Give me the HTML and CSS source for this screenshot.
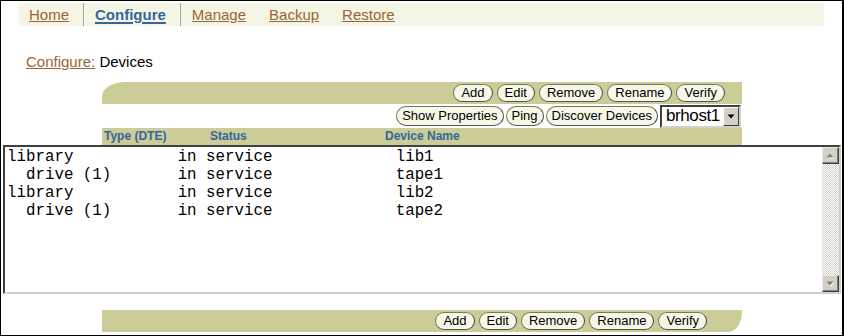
FILE: index.html
```html
<!DOCTYPE html>
<html>
<head>
<meta charset="utf-8">
<title>Configure: Devices</title>
<link rel="stylesheet" href="styles.css">
</head>
<body>
<div class="frame">
  <nav class="tabs">
    <a class="tab first" href="#">Home</a>
    <span class="sep"></span>
    <a class="tab active" href="#">Configure</a>
    <span class="sep"></span>
    <a class="tab" href="#">Manage</a>
    <a class="tab" href="#">Backup</a>
    <a class="tab" href="#">Restore</a>
  </nav>

  <div class="crumb"><a href="#">Configure:</a> Devices</div>

  <div class="panel">
    <div class="bar bar-top">
      <button class="pill">Add</button>
      <button class="pill">Edit</button>
      <button class="pill">Remove</button>
      <button class="pill">Rename</button>
      <button class="pill">Verify</button>
    </div>
    <div class="row2">
      <button class="pill sm">Show Properties</button>
      <button class="pill sm">Ping</button>
      <button class="pill sm">Discover Devices</button>
      <div class="select">
        <span class="sel-text">brhost1</span>
        <span class="sel-btn"><svg width="8" height="5" viewBox="0 0 8 5"><path d="M0.5 0.5h7L4 4.5z" fill="#000"/></svg></span>
      </div>
    </div>
    <div class="cols">
      <span class="c1">Type (DTE)</span>
      <span class="c2">Status</span>
      <span class="c3">Device Name</span>
    </div>
  </div>

  <div class="listbox">
    <pre class="list">library           in service             lib1
  drive (1)       in service             tape1
library           in service             lib2
  drive (1)       in service             tape2</pre>
    <div class="vscroll">
      <div class="sb-btn"><svg width="9" height="6" viewBox="0 0 9 6"><path d="M1.5 5.5h7L5 1.5z" fill="#fff"/><path d="M0.5 4.5h7L4 0.5z" fill="#808080"/></svg></div>
      <div class="sb-track"></div>
      <div class="sb-btn"><svg width="9" height="6" viewBox="0 0 9 6"><path d="M1.5 1.5h7L5 5.5z" fill="#fff"/><path d="M0.5 0.5h7L4 4.5z" fill="#808080"/></svg></div>
    </div>
  </div>

  <div class="panel bottom-panel">
    <div class="bar bar-bottom">
      <button class="pill">Add</button>
      <button class="pill">Edit</button>
      <button class="pill">Remove</button>
      <button class="pill">Rename</button>
      <button class="pill">Verify</button>
    </div>
  </div>
</div>
</body>
</html>
```

FILE: styles.css
```css
html, body {
  margin: 0;
  padding: 0;
  background: #fff;
}

.frame {
  width: 844px;
  height: 336px;
  box-sizing: border-box;
  border: 1px solid #000;
  border-right-width: 2px;
  font-family: "Liberation Sans", Arial, sans-serif;
  overflow: hidden;
}

/* Tabs */
.tabs {
  display: flex;
  height: 23px;
  margin: 2px 18px 0 18px;
  background: #f5f5e6;
}
.tab {
  font-size: 15px;
  line-height: 23px;
  color: #996633;
  text-decoration: underline;
  padding: 0 12px 0 11px;
}
.tab.first {
  padding-left: 10px;
  padding-right: 14px;
}
.tab.active {
  color: #336699;
  font-weight: bold;
  text-decoration-thickness: 2px;
  text-underline-offset: 2px;
  padding-right: 14px;
}
.sep {
  width: 1px;
  background: #a6a6a6;
}

/* Breadcrumb */
.crumb {
  margin: 27px 0 0 25px;
  font-size: 15px;
  line-height: 17px;
  color: #000;
}
.crumb a {
  color: #996633;
}

/* Panel */
.panel {
  margin: 12px 0 0 101px;
  width: 640px;
}
.bottom-panel {
  margin-top: 16px;
}
.bar {
  height: 22px;
  background: #cccc99;
  display: flex;
  align-items: center;
  justify-content: flex-end;
  gap: 4px;
}
.bar-top {
  border-top-left-radius: 24px 14px;
  padding-right: 17px;
}
.bar-bottom {
  border-bottom-right-radius: 14px 20px;
  padding-right: 35px;
}

.pill {
  font: 13px "Liberation Sans", Arial, sans-serif;
  height: 18px;
  line-height: 16px;
  padding: 0 7px;
  margin: 0;
  border: 1px solid #77775f;
  border-right-color: #444;
  border-bottom-color: #555;
  border-radius: 9px;
  background: #f7f7e7;
  color: #000;
}
.pill.sm {
  height: 20px;
  padding: 0 5px;
  border-radius: 10px;
}

.row2 {
  height: 24px;
  display: flex;
  align-items: center;
  justify-content: flex-end;
  gap: 2px;
  padding-right: 1px;
}

.select {
  width: 81px;
  height: 23px;
  box-sizing: border-box;
  border: 2px solid;
  border-color: #404040 #d4d0c8 #d4d0c8 #404040;
  background: #fff;
  display: flex;
  align-items: center;
}
.sel-text {
  flex: 1;
  font-size: 17px;
  letter-spacing: -0.4px;
  padding-left: 4px;
  color: #000;
}
.sel-btn {
  width: 16px;
  height: 19px;
  box-sizing: border-box;
  background: #d4d0c8;
  border: 1px solid;
  border-color: #fff #404040 #404040 #fff;
  display: flex;
  align-items: center;
  justify-content: center;
}

.cols {
  height: 17px;
  background: #cccc99;
  display: flex;
  font-size: 12px;
  font-weight: bold;
  line-height: 17px;
  color: #336699;
}
.c1 { width: 106px; padding-left: 2px; }
.c2 { width: 175px; }

/* List box */
.listbox {
  margin: 0 1px 0 2px;
  height: 149px;
  box-sizing: border-box;
  border: 2px solid;
  border-color: #404040 #d4d0c8 #d4d0c8 #404040;
  background: #fff;
  display: flex;
}
.list {
  flex: 1;
  margin: 0;
  padding: 1px 0 0 2px;
  font-family: "Liberation Mono", "Courier New", monospace;
  font-size: 15.8px;
  line-height: 18px;
  color: #000;
}
.vscroll {
  width: 17px;
  display: flex;
  flex-direction: column;
}
.sb-btn {
  height: 17px;
  box-sizing: border-box;
  background: #d4d0c8;
  border: 1px solid;
  border-color: #e8e8e8 #404040 #404040 #e8e8e8;
  box-shadow: inset -1px -1px 0 #808080;
  display: flex;
  align-items: center;
  justify-content: center;
}
.sb-track {
  flex: 1;
  background: conic-gradient(#d4d0c8 25%, #fff 0 50%, #d4d0c8 0 75%, #fff 0) 0 0 / 2px 2px;
}
```
